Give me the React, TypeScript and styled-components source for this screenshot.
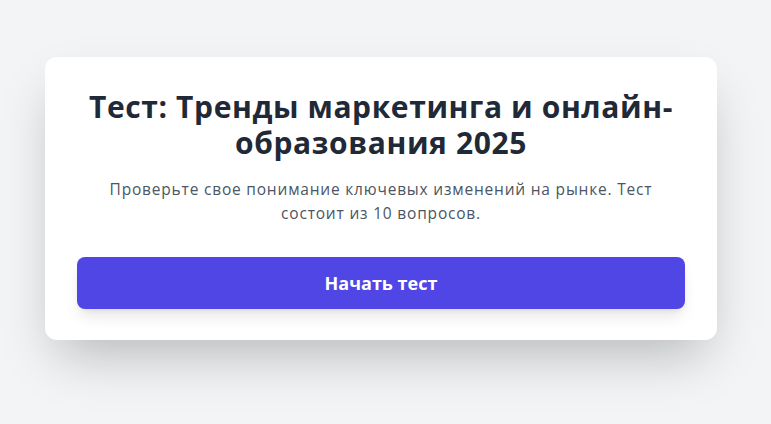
import styled, { createGlobalStyle } from 'styled-components';

const GlobalStyle = createGlobalStyle`
    html, body {
        margin: 0;
        padding: 0;
        background: #f3f4f6;
        font-family: "Open Sans", "Noto Sans", sans-serif;
    }
`;

const Page = styled.main`
    min-height: 424px;
    box-sizing: border-box;
    display: flex;
    justify-content: center;
    align-items: flex-start;
    padding: 57px 9px 0 0;
`;

const Card = styled.section`
    width: 672px;
    box-sizing: border-box;
    background: #ffffff;
    border-radius: 12px;
    padding: 32px 32px 31px;
    box-shadow: 0 25px 50px -12px rgba(0, 0, 0, 0.25);
    text-align: center;
`;

const Title = styled.h1`
    margin: 0 0 16px 0;
    font-size: 30px;
    line-height: 36px;
    font-weight: 700;
    letter-spacing: 0.6px;
    color: #1f2937;
`;

const Description = styled.p`
    margin: 0 auto 32px auto;
    max-width: 580px;
    font-size: 15.5px;
    line-height: 24px;
    font-weight: 400;
    letter-spacing: 0.8px;
    color: #4b5563;
`;

const StartButton = styled.button`
    display: block;
    width: 100%;
    border: none;
    border-radius: 8px;
    padding: 12px 0;
    background: #4f46e5;
    color: #ffffff;
    font-family: inherit;
    font-size: 18px;
    line-height: 28px;
    font-weight: 700;
    cursor: pointer;
    box-shadow: 0 10px 15px -3px rgba(0, 0, 0, 0.1), 0 4px 6px -4px rgba(0, 0, 0, 0.1);
`;

const App = () => {
    return (
        <>
            <GlobalStyle />
            <Page>
                <Card>
                    <Title>Тест: Тренды маркетинга и онлайн-образования 2025</Title>
                    <Description>
                        Проверьте свое понимание ключевых изменений на рынке. Тест состоит из 10 вопросов.
                    </Description>
                    <StartButton type="button">Начать тест</StartButton>
                </Card>
            </Page>
        </>
    );
};

export default App;
